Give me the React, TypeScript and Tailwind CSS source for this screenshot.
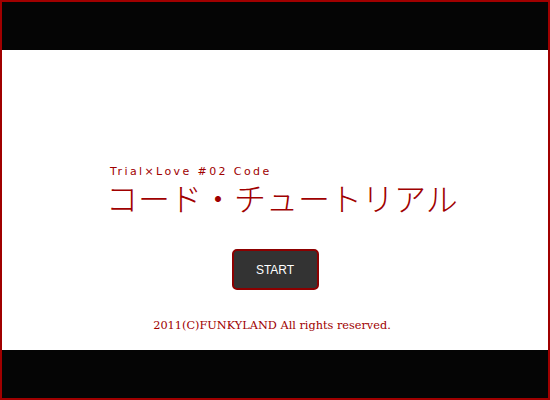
import React from "react";

export default function App() {
  return (
    <div className="w-[550px] h-[400px] border-2 border-[#a00000] flex flex-col bg-white">
      <div className="h-[48px] bg-[#050505]" />
      <div className="h-[300px] bg-white flex flex-col">
        <div className="pl-[104px] pt-[116px] flex flex-col gap-[3px]">
          <div
            className="text-[11px] leading-[12px] tracking-[2.4px] text-[#a00000] pl-[4px]"
            style={{ fontFamily: '"DejaVu Sans", sans-serif' }}
          >
            Trial×Love #02 Code
          </div>
          <div
            className="text-[32px] leading-[32px] text-[#a00000] font-light"
            style={{ fontFamily: '"Noto Sans CJK JP", sans-serif' }}
          >
            コード・チュートリアル
          </div>
        </div>
        <div className="flex justify-center pt-[36px]">
          <button
            className="w-[87px] h-[41px] rounded-[5px] border-2 border-[#8c0000] bg-[#333333] text-white text-[12px]"
            style={{ fontFamily: '"Liberation Sans", Arial, sans-serif' }}
          >
            START
          </button>
        </div>
        <div
          className="flex justify-center pt-[28px] text-[11.3px] text-[#a00000] pr-[6px]"
          style={{ fontFamily: '"DejaVu Serif", serif' }}
        >
          2011(C)FUNKYLAND All rights reserved.
        </div>
      </div>
      <div className="h-[48px] bg-[#050505]" />
    </div>
  );
}
